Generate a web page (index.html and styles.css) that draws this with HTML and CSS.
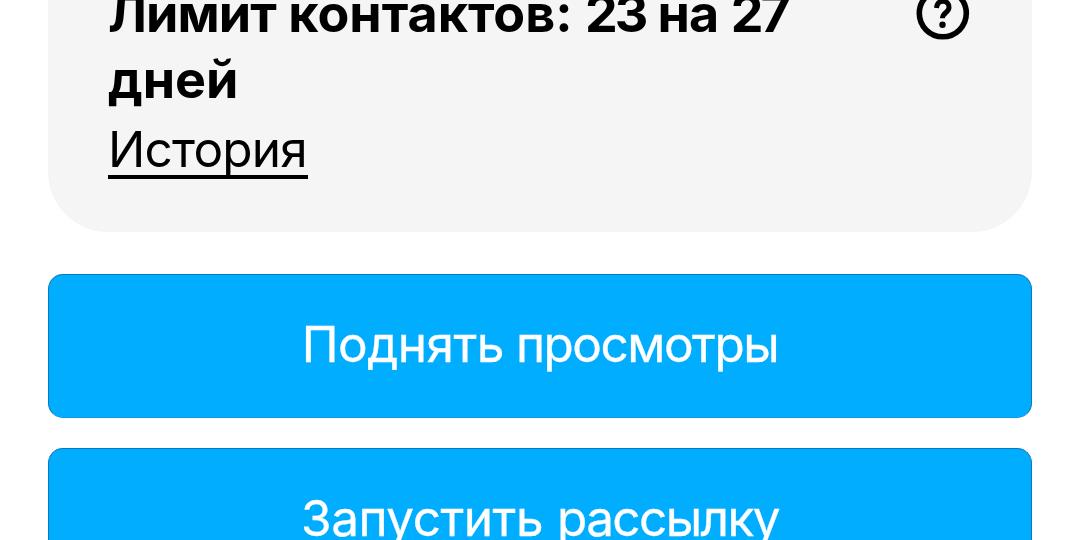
FILE: index.html
```html
<!DOCTYPE html>
<html lang="ru">
<head>
<meta charset="utf-8">
<title>Лимит контактов</title>
<link rel="stylesheet" href="styles.css">
</head>
<body>
<main class="page">
  <section class="card">
    <div class="info">
      <h2 class="title"><span class="line"><span class="tight">Лимит</span> контактов: <span class="num">23</span> <span class="tight">на</span> <span class="num">27</span></span> <span class="line">дней</span></h2>
      <a class="history"><span class="history-text">История</span></a>
    </div>
    <svg class="help" viewBox="0 0 54 54" aria-label="Справка">
      <circle cx="26.8" cy="27.3" r="23.5" fill="none" stroke="#000" stroke-width="5.6"/>
      <path d="M20.5 22C21 17.5 23.5 15.3 27 15.3S33 17.5 33 21.5C33 26.5 26.5 26.5 26.5 32.3" fill="none" stroke="#000" stroke-width="5"/>
      <circle cx="26.5" cy="38.8" r="3.2"/>
    </svg>
  </section>
  <button class="action"><span class="label"><span class="w1">Поднять</span> <span class="w2">просмотры</span></span></button>
  <button class="action"><span class="label"><span class="w1">Запустить</span> <span class="w3">рассылку</span></span></button>
</main>
</body>
</html>
```
FILE: styles.css
```css
* { box-sizing: border-box; }
body { margin: 0; height: 540px; overflow: hidden; background: #fff; font-family: Inter, sans-serif; color: #000; }
.page { display: flex; flex-direction: column; height: 540px; overflow: hidden; padding: 0 48px; }
.card { display: flex; justify-content: space-between; height: 232px; flex: none; padding: 0 62px 0 60px; background: #f5f5f5; border-radius: 0 0 60px 60px; }
.title { margin: -19px 0 0; font-size: 52px; font-weight: 700; line-height: 66px; }
.line { display: block; width: max-content; white-space: nowrap; }
.tight { letter-spacing: -0.9px; }
.num { letter-spacing: -3px; }
.history { display: block; width: 200px; height: 58px; margin-top: 8px; border-bottom: 4px solid #000; }
.history-text { display: block; width: max-content; font-size: 49.5px; line-height: 57px; letter-spacing: -0.8px; }
.help { width: 54px; height: 54px; margin-top: -14px; flex: none; }
.action { display: flex; align-items: center; justify-content: center; flex: none; height: 144px; margin: 42px 0 0; padding: 0 0 4px; border: 1px solid #0878c0; border-bottom-color: #0a98ec; border-radius: 15px; background: #00adff; color: #fff; font: 400 49.5px Inter, sans-serif; -webkit-text-stroke: 0.3px #fff; }
.action + .action { margin-top: 30px; }
.label { white-space: nowrap; }
.w1 { letter-spacing: -0.5px; }
.w2 { margin-left: -2px; letter-spacing: -1.5px; }
.w3 { letter-spacing: -1.6px; }
```
